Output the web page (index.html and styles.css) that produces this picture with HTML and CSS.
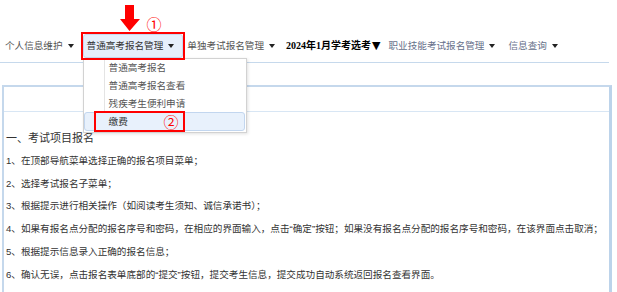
FILE: index.html
```html
<!DOCTYPE html>
<html lang="zh-CN">
  <head>
    <meta charset="UTF-8" />
    <title>考试报名</title>
    <link rel="stylesheet" href="styles.css">
  </head>
  <body>
    <div class="header">
      <ul class="nav">
        <li class="nav-item">个人信息维护<span class="caret"></span></li>
        <li class="mark">
          <div class="nav-item active">
            普通高考报名管理<span class="caret"></span>
            <!-- Dropdown -->
            <ul class="dropdown">
              <li>普通高考报名</li>
              <li>普通高考报名查看</li>
              <li>残疾考生便利申请</li>
              <li class="current">
                缴费
                <span class="mark-2"><span class="num">②</span></span>
              </li>
            </ul>
          </div>
          <svg class="arrow" width="20" height="26" viewBox="0 0 20 26">
            <polygon points="5,0 14,0 14,14 20,14 9.5,26 0,14 5,14" fill="#f00" />
          </svg>
          <span class="num num-1">①</span>
        </li>
        <li class="nav-item">单独考试报名管理<span class="caret"></span></li>
        <li class="nav-item bold">2024年1月学考选考<span class="tri">▼</span></li>
        <li class="nav-item light">职业技能考试报名管理<span class="caret"></span></li>
        <li class="nav-item light">信息查询<span class="caret"></span></li>
      </ul>
    </div>

    <div class="box">
      <div class="box-title"></div>
      <div class="box-body">
        <h3>一、考试项目报名</h3>
        <p>1、在顶部导航菜单选择正确的报名项目菜单；</p>
        <p>2、选择考试报名子菜单；</p>
        <p>3、根据提示进行相关操作（如阅读考生须知、诚信承诺书）；</p>
        <p>4、如果有报名点分配的报名序号和密码，在相应的界面输入，点击“确定”按钮；如果没有报名点分配的报名序号和密码，在该界面点击取消；</p>
        <p>5、根据提示信息录入正确的报名信息；</p>
        <p>6、确认无误，点击报名表单底部的“提交”按钮，提交考生信息，提交成功自动系统返回报名查看界面。</p>
      </div>
    </div>
  </body>
</html>
```

FILE: styles.css
```css
body {
  margin: 0;
  font-family: "Liberation Sans", "Noto Sans CJK SC", sans-serif;
  background-color: #fff;
  color: #333;
}

ul {
  list-style: none;
  margin: 0;
  padding: 0;
}

.header {
  width: 609px;
  padding-top: 32px;
  padding-bottom: 2px;
  border-bottom: 1px solid #c6d9ec;
}

.nav {
  display: flex;
  align-items: center;
  height: 28px;
  padding-left: 1px;
}

.nav-item {
  height: 24px;
  line-height: 24px;
  padding: 0 9px 0 4px;
  font-size: 9.6px;
  color: #555;
  white-space: nowrap;
}

.nav-item.light {
  color: #66708a;
}

.nav-item.bold {
  padding: 0 4px 0 2px;
  font-family: "Liberation Serif", "Noto Sans CJK SC", serif;
  font-size: 10px;
  font-weight: bold;
  color: #000;
}

.tri {
  margin-left: 1px;
  font-family: "DejaVu Sans", sans-serif;
  font-size: 11px;
  font-weight: normal;
}

.nav-item.active {
  position: relative;
  height: 22px;
  line-height: 22px;
  padding: 0 8px 0 3px;
  border: 1px solid #c8daf0;
  border-radius: 3px;
  background-color: #e6effb;
  color: #333;
}

.caret {
  display: inline-block;
  width: 0;
  height: 0;
  margin-left: 5px;
  border-left: 3px solid transparent;
  border-right: 3px solid transparent;
  border-top: 4px solid #222;
  vertical-align: middle;
}

/* Red annotation boxes */
.mark {
  position: relative;
  padding: 2px;
  margin: 0 -2px;
}

.mark::after {
  content: "";
  position: absolute;
  left: 0;
  top: 0;
  right: 0;
  bottom: 0;
  border: 2px solid #f00;
  z-index: 3;
}

.arrow {
  position: absolute;
  left: 39px;
  top: -27px;
}

.num {
  font-family: "Noto Sans CJK SC", sans-serif;
  font-size: 15px;
  line-height: 15px;
  color: #f00;
}

.num-1 {
  position: absolute;
  left: 66px;
  top: -16px;
}

/* Dropdown */
.dropdown {
  position: absolute;
  left: -1px;
  top: 23px;
  width: 162px;
  padding-bottom: 1px;
  border: 1px solid #d2d2d2;
  background: linear-gradient(to right, transparent 20px, #e4e4e4 20px, #e4e4e4 21px, transparent 21px), #fff;
  box-shadow: 1px 1px 3px rgba(0, 0, 0, 0.12);
  z-index: 2;
}

.dropdown li {
  position: relative;
  height: 18px;
  line-height: 18px;
  padding-left: 25px;
  font-size: 9.6px;
  color: #555;
}

.dropdown li.current {
  height: 17px;
  line-height: 17px;
  margin: -1px 1px 0 0;
  padding-left: 24px;
  border: 1px solid #c2d6ef;
  border-radius: 3px;
  background-color: #e8f1fc;
  color: #333;
}

.mark-2 {
  position: absolute;
  left: 9px;
  top: -2px;
  width: 83px;
  height: 17px;
  padding-right: 4px;
  border: 2px solid #f00;
  display: flex;
  align-items: center;
  justify-content: flex-end;
}

/* Content box */
.box {
  width: 605px;
  height: 205px;
  margin: 22px 0 0 2px;
  border: 2px solid #c5d8ec;
  border-right: 3px solid #bcd3ea;
  border-bottom: none;
}

.box-title {
  height: 24px;
  border-bottom: 1px solid #d8e6f4;
}

.box-body {
  padding: 15px 0 0 2px;
}

.box-body h3 {
  margin: 0;
  font-size: 11px;
  font-weight: normal;
  line-height: 22.8px;
  color: #333;
}

.box-body p {
  margin: 0;
  font-size: 9.6px;
  line-height: 22.8px;
  white-space: nowrap;
}
```
